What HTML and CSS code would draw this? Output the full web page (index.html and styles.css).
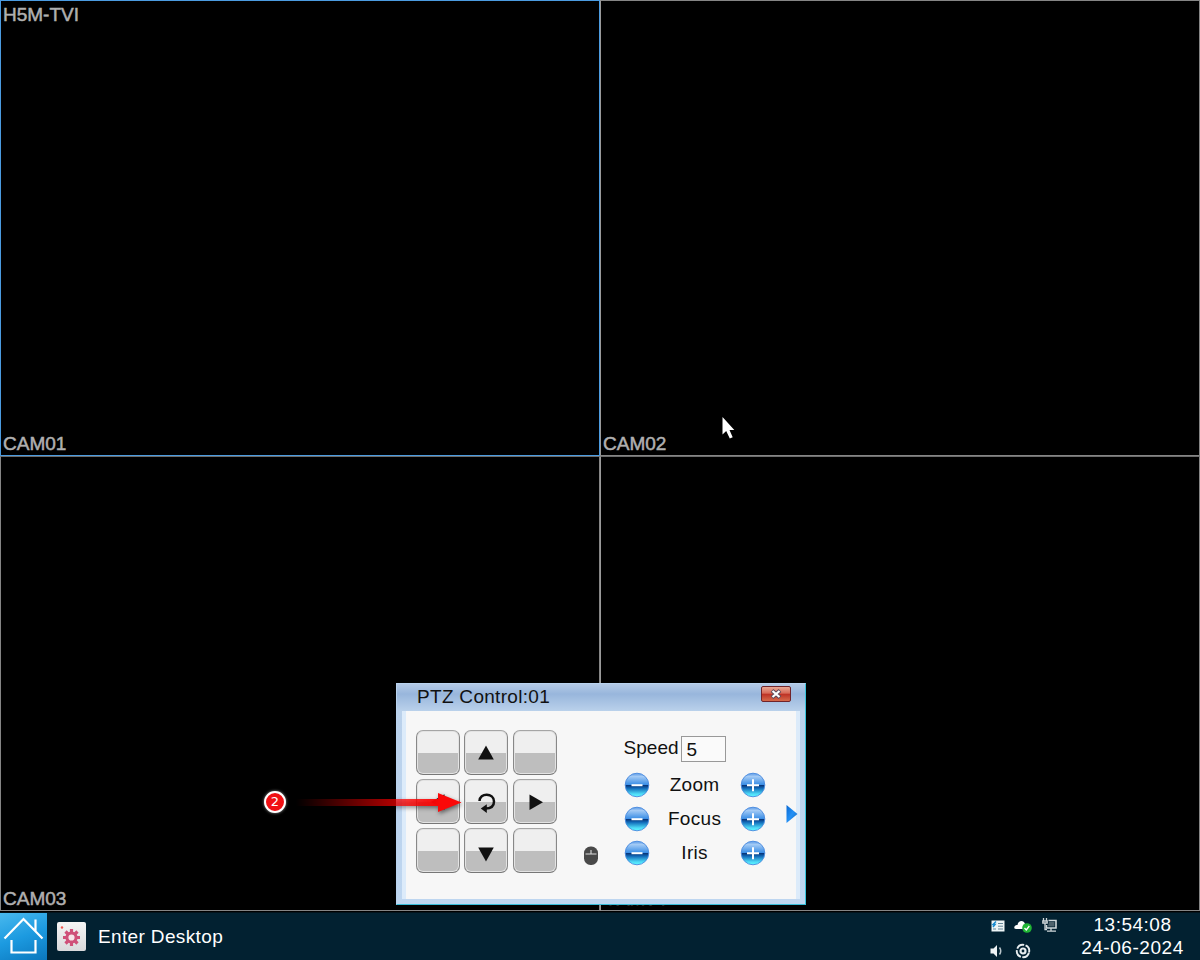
FILE: index.html
```html
<!DOCTYPE html>
<html lang="en">
<head>
<meta charset="utf-8">
<title>PTZ Control</title>
<link rel="stylesheet" href="styles.css">
</head>
<body>
<svg class="defs" width="0" height="0">
  <defs>
    <linearGradient id="ball" x1="0" y1="0" x2="0" y2="1">
      <stop offset="0" stop-color="#5b9ae6"/><stop offset=".14" stop-color="#a3caf5"/><stop offset=".48" stop-color="#3c8fe6"/>
      <stop offset=".52" stop-color="#08377c"/><stop offset=".64" stop-color="#126cba"/><stop offset=".88" stop-color="#4fdcf8"/><stop offset="1" stop-color="#5dfaff"/>
    </linearGradient>
    <linearGradient id="fade" gradientUnits="userSpaceOnUse" x1="36" y1="0" x2="180" y2="0">
      <stop offset="0" stop-color="#f00" stop-opacity="0"/><stop offset=".65" stop-color="#f00" stop-opacity=".65"/><stop offset="1" stop-color="#fa0808"/>
    </linearGradient>
    <linearGradient id="tri" x1="0" y1="0" x2="1" y2="1">
      <stop offset="0" stop-color="#0a68d2"/><stop offset=".5" stop-color="#2390f5"/><stop offset="1" stop-color="#1469bd"/>
    </linearGradient>
    <symbol id="minus" viewBox="0 0 26 26">
      <circle cx="13" cy="13" r="11.8" fill="url(#ball)" stroke="#4789df" stroke-width=".9"/>
      <path d="M7.5 13.2H18.5" stroke="#fff" stroke-width="2"/>
    </symbol>
    <symbol id="plus" viewBox="0 0 26 26">
      <circle cx="13" cy="13" r="11.8" fill="url(#ball)" stroke="#4789df" stroke-width=".9"/>
      <path d="M7 13.2H19M13 7.200V19.200" stroke="#fff" stroke-width="2"/>
    </symbol>
  </defs>
</svg>
<div class="screen">
  <main class="cameras">
    <section class="cam active"><span>H5M-TVI</span><span>CAM01</span></section>
    <section class="cam right"><span></span><span>CAM02</span></section>
    <section class="cam lower"><span></span><span>CAM03</span></section>
    <section class="cam right lower"><span></span><span>CAM04</span></section>
  </main>
  <footer class="taskbar">
    <div class="home">
      <svg width="47" height="47" viewBox="0 0 47 47" fill="none" stroke="#fff" stroke-width="2.2">
        <path d="M4.5 25.500L23.500 6L42.500 25.500M35.500 18V6.500M11.500 27V39.500H35.500V27"/>
      </svg>
    </div>
    <div class="app">
      <svg width="29" height="29" viewBox="0 0 29 29">
        <g stroke="#cf5079" stroke-width="3.2"><path d="M14.500 7V24M6 15.500H23M8.500 9.500L20.500 21.500M20.500 9.500L8.500 21.500"/></g>
        <circle cx="14.500" cy="15.500" r="4.600" fill="#f6e4e9" stroke="#cf5079" stroke-width="3"/>
        <circle cx="5" cy="5.500" r="1.200" fill="#f0564e"/>
      </svg>
    </div>
    <span class="enter">Enter Desktop</span>
    <div class="tray">
      <svg width="16" height="14" viewBox="0 0 16 14"><path d="M1.500 1.500h13v11h-13z" fill="#edf5f6"/><path d="M6 2.500L3 5.500H5L3 8" stroke="#168bd1" fill="none" stroke-width="1.500"/><path d="M8 4.500h5M8 7.200h5M3 10h3M8 10h5" stroke="#65879a"/></svg>
      <svg class="cloud" width="20" height="14" viewBox="0 0 20 14"><path d="M1.500 9.500C.500 7 3 5.500 4.500 6C5 1 11 .500 12 5C15 5 16 8 14 10H3Z" fill="#fff"/><circle cx="14" cy="9" r="4.800" fill="#20b534"/><path d="M11.500 9l1.800 2 3-4" stroke="#fff" stroke-width="1.300" fill="none"/></svg>
      <svg width="16" height="15" viewBox="0 0 16 15" fill="none" stroke="#d0d7da"><path d="M6.500 2.500h7.500v7.500H4.500V7" stroke-width="1.600"/><path d="M7 4h5.500v4.500H6z" fill="#4e626c" stroke="none"/><path d="M1.500 0v3M4.500 0v3M.800 3h4.400v2H.800zM3 5v6.500h2M9 10v3M5 13.200h9" stroke-width="1.300"/></svg>
      <svg class="sound" width="16" height="14" viewBox="0 0 16 14"><path d="M1.500 4.500h3L8 1v12L4.500 9.500H1.500z" fill="#eef2f4"/><path d="M10.500 3.500Q13 7 10.500 10.500" fill="none" stroke="#b9c5cb" stroke-width="1.500"/></svg>
      <svg class="target" width="16" height="16" viewBox="0 0 16 16" fill="none" stroke="#e7edef"><circle cx="8" cy="8" r="6.200" stroke-width="1.900" stroke-dasharray="8.200 1.540" transform="rotate(18 8 8)"/><circle cx="8" cy="8" r="2.500" stroke-width="2.200"/></svg>
    </div>
    <div class="clock"><span class="time">13:54:08</span><span class="date">24-06-2024</span></div>
  </footer>

  <div class="dialog">
    <header><h1>PTZ Control:01</h1>
      <button class="close" aria-label="Close"><svg width="14" height="10" viewBox="0 0 14 10"><path d="M3 1.500L11 8.500M11 1.500L3 8.500" stroke="#5c4b5b" stroke-width="4"/><path d="M3.500 2L10.500 8M10.500 2L3.500 8" stroke="#fff" stroke-width="2.200"/></svg></button>
    </header>
    <div class="panel">
      <div class="pad">
        <button></button>
        <button><svg viewBox="0 0 44 44"><path d="M22 14.500L29.800 28.500H14.200Z"/></svg></button>
        <button></button>
        <button><svg viewBox="0 0 44 44"><path d="M15 22L28.500 14.200V29.800Z"/></svg></button>
        <button><svg viewBox="0 0 44 44"><path d="M15.500 21C15.500 12.500 30 12.500 30 21.500C30 26 27 28.500 21.500 28.500" fill="none" stroke="#111" stroke-width="2.500"/><path d="M16.800 28.500L22.800 24.200V33Z"/></svg></button>
        <button><svg viewBox="0 0 44 44"><path d="M16.500 14.500L30 22.300L16.500 30Z"/></svg></button>
        <button></button>
        <button><svg viewBox="0 0 44 44"><path d="M14.200 18.500H29.800L22 32.500Z"/></svg></button>
        <button></button>
      </div>
      <svg class="mouse" width="16" height="20" viewBox="0 0 16 20"><rect x="1" y=".5" width="14" height="18.500" rx="6.500" fill="#494949"/><path d="M2.500 8h11M8 4v4" stroke="#ddd" stroke-width="1.100"/></svg>
      <div class="controls">
        <label class="speed">Speed<span class="field">5</span></label>
        <div class="row"><svg><use href="#minus"/></svg><span>Zoom</span><svg><use href="#plus"/></svg></div>
        <div class="row"><svg><use href="#minus"/></svg><span>Focus</span><svg><use href="#plus"/></svg></div>
        <div class="row"><svg><use href="#minus"/></svg><span>Iris</span><svg><use href="#plus"/></svg></div>
      </div>
      <svg class="more" width="12" height="20" viewBox="0 0 12 20"><path d="M.500 1L11.500 10L.500 19Z" fill="url(#tri)"/></svg>
    </div>
  </div>

  <div class="callout">
    <span class="num">2</span>
    <svg width="204" height="34" viewBox="0 0 204 34"><path d="M36 14H178V8L201.500 17.500L178 27V21H36Z" fill="url(#fade)"/></svg>
  </div>
  <svg class="pointer" width="16" height="24" viewBox="0 0 16 24"><path d="M1.500 1V18.500L5.200 15L8.800 22.500L11.700 21.200L8.500 14H13.300Z" fill="#fff"/></svg>
</div>
</body>
</html>
```
FILE: styles.css
```css
* { box-sizing: border-box; }
body { margin: 0; background: #000; font-family: "Liberation Sans", Arial, sans-serif; font-size: 19px; line-height: 22px; }
svg { display: block; }
.defs { position: absolute; }
.screen { position: relative; width: 1200px; height: 960px; overflow: hidden; display: flex; flex-direction: column; }

.cameras { display: grid; grid-template-columns: 600px 600px; grid-template-rows: 456px 455px; height: 913px; flex: none; background: #000; }
.cam { display: flex; flex-direction: column; justify-content: space-between; padding: 3px 2px 0; border: 1px solid #858585; color: #b0b0b0; -webkit-text-stroke: .5px #b0b0b0; }
.cam span { height: 22px; }
.cam.active { border-color: #4b9be0; }
.cam.lower { border-top-color: #6c6c6c; }
.cam.right { border-left-color: #9a9a9a; }

.taskbar { display: flex; height: 47px; align-items: center; background: #022131; color: #fff; box-shadow: 0 -1px #03131c; z-index: 1; }
.home { width: 47px; height: 47px; background: linear-gradient(160deg, #49b9ee, #1c9ae0 50%, #0b77bd); }
.app { width: 29px; height: 29px; margin-left: 10px; border-radius: 2px; background: linear-gradient(#f5f5f5, #d9d9db); }
.enter { margin-left: 12px; letter-spacing: .36px; }
.tray { margin-left: auto; display: grid; grid-template-columns: 26px 26px 26px; grid-template-rows: 25px 23px; width: 79px; height: 47px; align-items: center; justify-items: center; }
.cloud { margin-left: -3px; }
.sound { margin: 3px 0 0 -3px; }
.target { margin: 3px 0 0 -3px; }
.clock { width: 136px; height: 47px; display: flex; flex-direction: column; align-items: center; padding: 1px 0 0 1px; }
.clock span { height: 23px; }
.time { letter-spacing: .5px; }
.date { letter-spacing: .55px; }

.dialog { position: absolute; left: 396px; top: 683px; width: 410px; height: 222px; border: 1px solid #b9d3ef; border-right-color: #38c4dc; border-bottom: 1px solid #38bcd8; padding: 0 5px 5px; background: linear-gradient(#b4cae6, #98b6dc 10px, #bad1eb 27px, #bed6f0); display: flex; flex-direction: column; z-index: 2; color: #111; }
.dialog header { height: 27px; display: flex; align-items: flex-start; justify-content: space-between; padding: 2px 9px 0 15px; flex: none; }
h1 { margin: 0; font: inherit; letter-spacing: .3px; }
.close { width: 30px; height: 16px; margin-top: 0; padding: 0; border: 1px solid #70242a; border-radius: 2px; background: linear-gradient(#e8a794, #d76856 45%, #bd3024 50%, #d56a4b); display: flex; align-items: center; justify-content: center; }
.panel { flex: 1; background: #f7f7f7; border: solid #dcebfa; border-width: 0 4px; display: flex; }
.pad { display: grid; grid-template-columns: repeat(3, 44px); grid-template-rows: repeat(3, 45px); gap: 4px 4.800px; margin: 19px 0 0 9.600px; height: 143px; }
.pad button { padding: 0; border: 1px solid #888; border-top-color: #a5a5a5; border-bottom-color: #777; border-radius: 7px; background: linear-gradient(#efefef 0 52%, #bebebe 52%); box-shadow: inset 0 0 0 1px #e3e3e3; }
.pad svg { width: 44px; height: 44px; margin: -1px; fill: #111; }
.mouse { margin: 135px 0 0 25.400px; flex: none; }
.controls { width: 142px; flex: none; margin: 25px 0 0 25px; }
.speed { display: flex; height: 32px; line-height: 24px; }
.field { width: 45px; height: 26px; border: 1px solid #999; margin-left: 2px; padding-left: 5px; background: #fafafa; line-height: 25px; }
.row { height: 34px; display: flex; align-items: center; }
.row svg { width: 26px; height: 26px; flex: none; }
.row span { width: 90px; text-align: center; letter-spacing: .3px; height: 23px; }
.more { margin: 93px -5px 0 20px; flex: none; }

.callout { position: absolute; left: 260px; top: 785px; width: 204px; height: 34px; z-index: 3; }
.callout svg { filter: drop-shadow(1px 2px 2px rgba(0,0,0,.5)); }
.num { position: absolute; left: 4px; top: 6px; width: 22px; height: 22px; border: 2px solid #fff; border-radius: 50%; background: #f01014; color: #fff; font: 13px/18px "DejaVu Sans", sans-serif; text-align: center; box-shadow: 0 0 3px #999; }
.pointer { position: absolute; left: 721px; top: 416px; }
```
